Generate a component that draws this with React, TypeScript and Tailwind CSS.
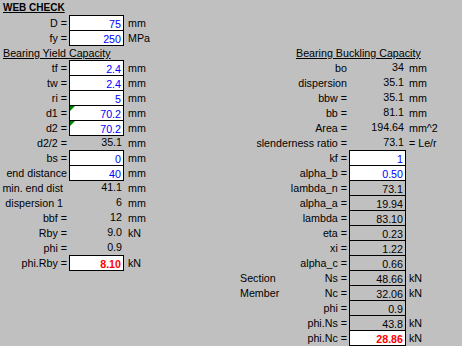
type Side = {
  label?: string
  value?: string
  unit?: string
  box?: 'white' | 'grey'
  tone?: 'blue' | 'red'
  note?: string
  flag?: boolean
  tight?: boolean
}

type Row = { left?: Side; right?: Side; kind?: 'title' | 'header' }

const rows: Row[] = [
  { kind: 'title' },
  { left: { label: 'D =', value: '75', unit: 'mm', box: 'white', tone: 'blue' } },
  { left: { label: 'fy =', value: '250', unit: 'MPa', box: 'white', tone: 'blue' } },
  { kind: 'header' },
  {
    left: { label: 'tf =', value: '2.4', unit: 'mm', box: 'white', tone: 'blue' },
    right: { label: 'bo', value: '34', unit: 'mm' },
  },
  {
    left: { label: 'tw =', value: '2.4', unit: 'mm', box: 'white', tone: 'blue' },
    right: { label: 'dispersion', value: '35.1', unit: 'mm' },
  },
  {
    left: { label: 'ri =', value: '5', unit: 'mm', box: 'white', tone: 'blue' },
    right: { label: 'bbw =', value: '35.1', unit: 'mm' },
  },
  {
    left: { label: 'd1 =', value: '70.2', unit: 'mm', box: 'white', tone: 'blue', flag: true },
    right: { label: 'bb =', value: '81.1', unit: 'mm' },
  },
  {
    left: { label: 'd2 =', value: '70.2', unit: 'mm', box: 'white', tone: 'blue', flag: true },
    right: { label: 'Area =', value: '194.64', unit: 'mm^2' },
  },
  {
    left: { label: 'd2/2 =', value: '35.1', unit: 'mm' },
    right: { label: 'slenderness ratio =', value: '73.1', unit: '= Le/r' },
  },
  {
    left: { label: 'bs =', value: '0', unit: 'mm', box: 'white', tone: 'blue' },
    right: { label: 'kf =', value: '1', box: 'white', tone: 'blue' },
  },
  {
    left: { label: 'end distance', value: '40', unit: 'mm', box: 'white', tone: 'blue' },
    right: { label: 'alpha_b =', value: '0.50', box: 'white', tone: 'blue' },
  },
  {
    left: { label: 'min. end dist', value: '41.1', unit: 'mm', tight: true },
    right: { label: 'lambda_n =', value: '73.1', box: 'grey' },
  },
  {
    left: { label: 'dispersion 1', value: '6', unit: 'mm', tight: true },
    right: { label: 'alpha_a =', value: '19.94', box: 'grey' },
  },
  {
    left: { label: 'bbf =', value: '12', unit: 'mm' },
    right: { label: 'lambda =', value: '83.10', box: 'grey' },
  },
  {
    left: { label: 'Rby =', value: '9.0', unit: 'kN' },
    right: { label: 'eta =', value: '0.23', box: 'grey' },
  },
  {
    left: { label: 'phi =', value: '0.9' },
    right: { label: 'xi =', value: '1.22', box: 'grey' },
  },
  {
    left: { label: 'phi.Rby =', value: '8.10', unit: 'kN', box: 'white', tone: 'red' },
    right: { label: 'alpha_c =', value: '0.66', box: 'grey' },
  },
  { right: { label: 'Ns =', value: '48.66', unit: 'kN', box: 'grey', note: 'Section' } },
  { right: { label: 'Nc =', value: '32.06', unit: 'kN', box: 'grey', note: 'Member' } },
  { right: { label: 'phi =', value: '0.9', box: 'grey' } },
  { right: { label: 'phi.Ns =', value: '43.8', unit: 'kN', box: 'grey' } },
  { right: { label: 'phi.Nc =', value: '28.86', unit: 'kN', box: 'white', tone: 'red' } },
]

function Value({ side, width }: { side: Side; width: string }) {
  const tone =
    side.tone === 'blue'
      ? 'text-[#0000ff]'
      : side.tone === 'red'
        ? 'text-[#ff0000] font-bold'
        : 'text-black'

  if (!side.box) {
    return (
      <div className={`${width} shrink-0 pr-[2px] text-right ${tone}`}>{side.value}</div>
    )
  }

  return (
    <div
      className={`${width} relative h-[16px] shrink-0 self-start border border-black pr-[2px] pt-[1px] text-right leading-[14px] ${tone} ${
        side.box === 'white' ? 'bg-white' : 'bg-[#c0c0c0]'
      }`}
    >
      {side.flag && (
        <span className="absolute left-0 top-0 h-0 w-0 border-r-[5px] border-t-[5px] border-r-transparent border-t-[#008000]" />
      )}
      {side.value}
    </div>
  )
}

export default function App() {
  return (
    <div
      className="h-[346px] w-[462px] overflow-hidden bg-[#c0c0c0] text-[10.7px] leading-[15px] text-black"
      style={{ fontFamily: '"Liberation Sans", Arial, sans-serif' }}
    >
      {rows.map((row, i) => {
        if (row.kind === 'title') {
          return (
            <div key={i} className="flex h-[15px] items-center pl-[3px]">
              <span className="text-[10px] font-bold underline">WEB CHECK</span>
            </div>
          )
        }
        if (row.kind === 'header') {
          return (
            <div key={i} className="flex h-[15px] whitespace-nowrap pt-[1px]">
              <div className="w-[237px] pl-[3px] underline">Bearing Yield Capacity</div>
              <div className="pl-[59px] underline">Bearing Buckling Capacity</div>
            </div>
          )
        }
        const { left, right } = row
        return (
          <div key={i} className="flex h-[15px] whitespace-nowrap pt-[1px]">
            <div className="flex w-[237px] shrink-0">
              {left && (
                <>
                  <div className={`w-[69px] shrink-0 text-right ${left.tight ? 'pr-[6px]' : 'pr-[2px]'}`}>
                    {left.label}
                  </div>
                  <div className="-mt-[1px] flex">
                    <Value side={left} width="w-[55px]" />
                  </div>
                  <div className="pl-[4px]">{left.unit}</div>
                </>
              )}
            </div>
            <div className="flex w-[225px] shrink-0">
              {right && (
                <>
                  <div className="flex w-[112px] shrink-0 justify-between pl-[3px] pr-[2px]">
                    <span>{right.note}</span>
                    <span>{right.label}</span>
                  </div>
                  <div className="-mt-[1px] flex">
                    <Value side={right} width="w-[57px]" />
                  </div>
                  <div className="pl-[3px]">{right.unit}</div>
                </>
              )}
            </div>
          </div>
        )
      })}
    </div>
  )
}
